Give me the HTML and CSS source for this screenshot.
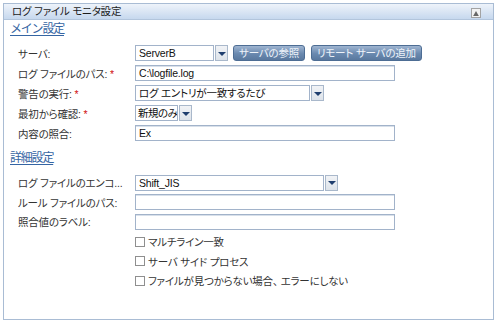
FILE: index.html
```html
<!DOCTYPE html>
<html lang="ja">
<head>
  <meta charset="UTF-8" />
  <title>ログ ファイル モニタ設定</title>
  <link rel="stylesheet" href="styles.css">
</head>
<body>
  <div class="panel">
    <div class="panel-head">
      <span class="panel-title">ログ ファイル モニタ設定</span>
      <svg class="collapse-icon" width="10" height="10" viewBox="0 0 10 10">
        <rect x="0.5" y="0.5" width="9" height="9" fill="#f2f2f2" stroke="#a3a3a3"/>
        <path d="M2.5 7.5 L5 3 L7.5 7.5 Z" fill="#666"/>
        <rect x="2.5" y="7" width="5" height="1" fill="#666"/>
      </svg>
    </div>

    <div class="panel-body">
      <h2 class="section-title first">メイン設定</h2>
      <div class="form-rows">
        <div class="form-row">
          <span class="form-label">サーバ:</span>
          <div class="form-field">
            <div class="combo">
              <span class="combo-value w-server">ServerB</span>
              <span class="combo-arrow"></span>
            </div>
            <button class="btn">サーバの参照</button>
            <button class="btn">リモート サーバの追加</button>
          </div>
        </div>
        <div class="form-row">
          <span class="form-label">ログ ファイルのパス: <span class="req">*</span></span>
          <div class="form-field">
            <div class="input">C:\logfile.log</div>
          </div>
        </div>
        <div class="form-row">
          <span class="form-label">警告の実行: <span class="req">*</span></span>
          <div class="form-field">
            <div class="combo">
              <span class="combo-value w-alert">ログ エントリが一致するたび</span>
              <span class="combo-arrow"></span>
            </div>
          </div>
        </div>
        <div class="form-row">
          <span class="form-label">最初から確認: <span class="req">*</span></span>
          <div class="form-field">
            <div class="combo">
              <span class="combo-value w-start">新規のみ</span>
              <span class="combo-arrow"></span>
            </div>
          </div>
        </div>
        <div class="form-row">
          <span class="form-label">内容の照合:</span>
          <div class="form-field">
            <div class="input">Ex</div>
          </div>
        </div>
      </div>

      <h2 class="section-title">詳細設定</h2>
      <div class="form-rows detail">
        <div class="form-row">
          <span class="form-label">ログ ファイルのエンコ...</span>
          <div class="form-field">
            <div class="combo">
              <span class="combo-value w-enc">Shift_JIS</span>
              <span class="combo-arrow"></span>
            </div>
          </div>
        </div>
        <div class="form-row">
          <span class="form-label">ルール ファイルのパス:</span>
          <div class="form-field">
            <div class="input"></div>
          </div>
        </div>
        <div class="form-row">
          <span class="form-label">照合値のラベル:</span>
          <div class="form-field">
            <div class="input"></div>
          </div>
        </div>
        <div class="form-row">
          <span class="form-label"></span>
          <label class="check"><span class="check-box"></span>マルチライン一致</label>
        </div>
        <div class="form-row">
          <span class="form-label"></span>
          <label class="check"><span class="check-box"></span>サーバ サイド プロセス</label>
        </div>
        <div class="form-row">
          <span class="form-label"></span>
          <label class="check"><span class="check-box"></span>ファイルが見つからない場合、 エラーにしない</label>
        </div>
      </div>
    </div>
  </div>
</body>
</html>
```

FILE: styles.css
```css
body {
  margin: 0;
  font-family: "Liberation Sans", "Noto Sans CJK JP", sans-serif;
  font-size: 10.5px;
  letter-spacing: -0.2px;
  color: #333;
  background: #fff;
  font-feature-settings: "palt";
}

.panel {
  margin: 3px 0 0 3px;
  width: 491px;
  height: 317px;
  box-sizing: border-box;
  border: 1px solid #a9bcd4;
}

.panel-head {
  height: 15px;
  display: flex;
  align-items: center;
  padding: 0 12px 0 8px;
  background: linear-gradient(#eef3fa, #c6d8ee);
  border-bottom: 1px solid #b2c5dc;
}

.panel-title {
  flex: 1;
  color: #1c1c1c;
  line-height: 15px;
}

.collapse-icon {
  display: block;
  margin-top: 2px;
}

.panel-body {
  padding: 0 6px;
}

/* Section headings */
.section-title {
  margin: 0;
  padding-top: 8px;
  height: 22px;
  font-size: 12px;
  font-weight: normal;
  line-height: 14px;
  letter-spacing: -1.2px;
  font-feature-settings: normal;
  color: #3565a3;
  text-decoration: underline;
  text-decoration-thickness: 1px;
  text-underline-offset: 2px;
}

.section-title.first {
  padding-top: 2px;
  height: 21px;
}

.form-row {
  display: flex;
  align-items: center;
  height: 20px;
  padding-left: 8px;
}

.detail .form-row {
  height: 19.6px;
}

.form-label {
  width: 117px;
  flex: none;
  white-space: nowrap;
  color: #333;
}

.req {
  color: #d01010;
}

.form-field {
  display: flex;
  align-items: center;
  gap: 5px;
}

.input {
  width: 260px;
  height: 16px;
  box-sizing: border-box;
  border: 1px solid #a2b3ca;
  box-shadow: inset 0 1px 0 #d8e0ea;
  padding: 0 3px;
  line-height: 14px;
  color: #111;
  background: #fff;
}

/* Dropdowns */
.combo {
  display: flex;
  gap: 1px;
}

.combo-value {
  height: 16px;
  box-sizing: border-box;
  border: 1px solid #a2b3ca;
  padding: 0 3px;
  line-height: 14px;
  color: #111;
  background: #fff;
  white-space: nowrap;
  overflow: hidden;
}

.w-server { width: 79px; }
.w-alert { width: 175px; }
.w-start { width: 43px; padding: 0 2px; letter-spacing: -0.5px; }
.w-enc { width: 189px; }

.combo-arrow {
  width: 13px;
  height: 16px;
  box-sizing: border-box;
  border: 1px solid #a9b8cb;
  background: linear-gradient(#f1f3f6, #dde3ea);
  display: flex;
  align-items: center;
  justify-content: center;
}

.combo-arrow:after {
  content: "";
  border-left: 4px solid transparent;
  border-right: 4px solid transparent;
  border-top: 4px solid #1f3e6e;
  margin-top: 1px;
}

/* Buttons */
.btn {
  height: 16px;
  padding: 0 5px;
  border: 1px solid #4d6d94;
  border-radius: 3px;
  background: linear-gradient(#9fb5d1, #6a89af 55%, #5a799f);
  color: #eef3f9;
  font-family: inherit;
  font-size: 10.5px;
  letter-spacing: -0.2px;
  line-height: 14px;
  font-feature-settings: "palt";
  cursor: pointer;
}

.btn + .btn {
  margin-left: 1px;
}

/* Checkboxes */
.check {
  display: flex;
  align-items: center;
  gap: 3px;
  color: #333;
}

.check-box {
  width: 10px;
  height: 10px;
  box-sizing: border-box;
  border: 1px solid #8f8f8f;
  background: #fff;
}
```
